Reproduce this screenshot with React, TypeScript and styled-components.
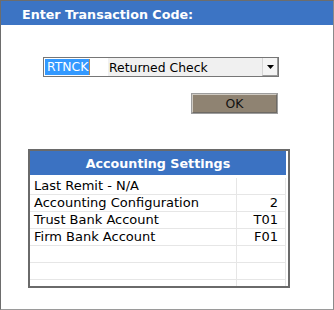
import React from "react";
import styled, { createGlobalStyle } from "styled-components";

const Global = createGlobalStyle`
  html, body { margin: 0; padding: 0; background: #ffffff; }
  body { font-family: "DejaVu Sans", Verdana, sans-serif; }
`;

const Window = styled.div`
  box-sizing: border-box;
  width: 334px;
  height: 310px;
  border: 1px solid #6d6d6d;
  border-bottom-color: #9a9a9a;
  border-right-color: #8a8a8a;
  background: #ffffff;
  display: flex;
  flex-direction: column;
  overflow: hidden;
`;

const TitleBar = styled.div`
  height: 24px;
  background: #3c74c4;
  color: #ffffff;
  font-weight: bold;
  font-size: 12.7px;
  display: flex;
  align-items: center;
  padding-left: 21px;
  padding-top: 3px;
  box-sizing: border-box;
`;

const Body = styled.div`
  display: flex;
  flex-direction: column;
  padding: 32px 0 0 42px;
`;

const Select = styled.div`
  box-sizing: border-box;
  width: 236px;
  height: 20px;
  border: 1px solid #767676;
  display: flex;
  align-items: stretch;
  font-size: 12.4px;
  color: #000;
`;

const CodeCell = styled.div`
  width: 63px;
  background: #ffffff;
  display: flex;
  align-items: center;
  padding-left: 1px;
`;

const Highlight = styled.span`
  background: #3399ff;
  color: #ffffff;
  height: 16px;
  line-height: 16px;
  padding: 0 1px 0 2px;
  border-right: 1px solid #b08a5a;
`;

const DescCell = styled.div`
  flex: 1;
  background: #f0f0f0;
  display: flex;
  align-items: center;
  padding-left: 1px;
`;

const DropButton = styled.div`
  width: 16px;
  box-sizing: border-box;
  background: #f4f4f4;
  border-left: 1px solid #d6d6d6;
  border-right: 1px solid #9a9a9a;
  border-bottom: 1px solid #9a9a9a;
  display: flex;
  align-items: center;
  justify-content: center;
`;

const ButtonRow = styled.div`
  display: flex;
  padding: 17px 0 0 149px;
`;

const OkButton = styled.button`
  box-sizing: border-box;
  width: 85px;
  height: 19px;
  background: #8f8372;
  border: 1px solid;
  border-color: #cfcac2 #6e6a64 #6e6a64 #cfcac2;
  outline: 1px solid #9d9d9d;
  font-family: "DejaVu Sans", Verdana, sans-serif;
  font-size: 12.4px;
  color: #111;
  padding: 0;
  display: flex;
  align-items: center;
  justify-content: center;
`;

const Table = styled.div`
  box-sizing: border-box;
  width: 262px;
  height: 139px;
  margin: 36px 0 0 27px;
  border: 2px solid #6a6a6a;
  padding-right: 2px;
  overflow: hidden;
  display: flex;
  flex-direction: column;
`;

const TableHeader = styled.div`
  height: 24px;
  flex-shrink: 0;
  background: #3b72c2;
  color: #ffffff;
  font-weight: bold;
  font-size: 12.7px;
  display: flex;
  align-items: center;
  justify-content: center;
  padding-top: 1px;
  box-sizing: border-box;
  margin-bottom: 3px;
`;

const Grid = styled.div`
  display: grid;
  grid-template-columns: 1fr 49px;
  grid-auto-rows: 17px;
  flex-shrink: 0;
`;

const Cell = styled.div<{ $right?: boolean }>`
  box-sizing: border-box;
  border-right: 1px solid #e6e6e6;
  border-bottom: 1px solid #e6e6e6;
  font-size: 13px;
  color: #000;
  line-height: 16px;
  white-space: nowrap;
  padding: ${(p) => (p.$right ? "0 7px 0 0" : "0 0 0 4px")};
  text-align: ${(p) => (p.$right ? "right" : "left")};
`;

const rows: [string, string][] = [
  ["Last Remit - N/A", ""],
  ["Accounting Configuration", "2"],
  ["Trust Bank Account", "T01"],
  ["Firm Bank Account", "F01"],
  ["", ""],
  ["", ""],
  ["", ""],
];

export default function App() {
  return (
    <>
      <Global />
      <Window>
        <TitleBar>Enter Transaction Code:</TitleBar>
        <Body>
          <Select>
            <CodeCell>
              <Highlight>RTNCK</Highlight>
            </CodeCell>
            <DescCell>Returned Check</DescCell>
            <DropButton>
              <svg width="7" height="4" viewBox="0 0 7 4">
                <path d="M0 0 H7 L3.5 4 Z" fill="#000" />
              </svg>
            </DropButton>
          </Select>
          <ButtonRow>
            <OkButton>OK</OkButton>
          </ButtonRow>
        </Body>
        <Table>
          <TableHeader>Accounting Settings</TableHeader>
          <Grid>
            {rows.map(([label, value], i) => (
              <React.Fragment key={i}>
                <Cell>{label}</Cell>
                <Cell $right>{value}</Cell>
              </React.Fragment>
            ))}
          </Grid>
        </Table>
      </Window>
    </>
  );
}
